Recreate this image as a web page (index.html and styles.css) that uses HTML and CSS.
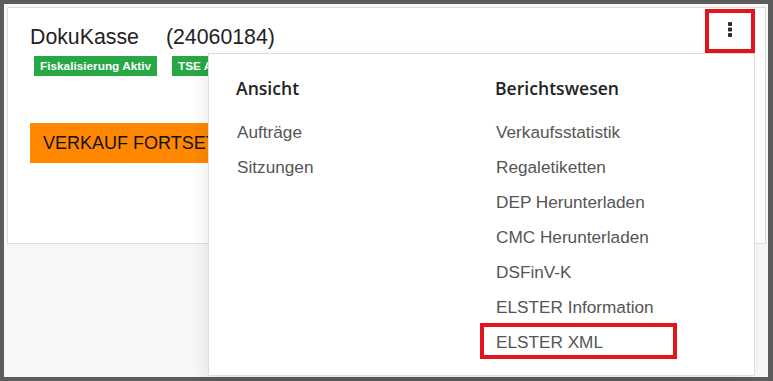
FILE: index.html
```html
<!DOCTYPE html>
<html lang="de">
<head>
<meta charset="utf-8">
<title>DokuKasse</title>
<link rel="stylesheet" href="styles.css">
</head>
<body>
<div class="frame">
  <div class="page">
    <div class="card">
      <div class="card-head">
        <h1 class="title"><span>DokuKasse</span><span class="num">(24060184)</span></h1>
        <button class="kebab" aria-label="Menü">
          <svg width="6" height="16" viewBox="0 0 6 16"><rect x="1" y="0" width="4" height="4" rx="0.8" fill="#2b2f36"/><rect x="1" y="5.5" width="4" height="4" rx="0.8" fill="#2b2f36"/><rect x="1" y="11" width="4" height="4" rx="0.8" fill="#2b2f36"/></svg>
        </button>
      </div>
      <div class="badges">
        <span class="badge">Fiskalisierung Aktiv</span>
        <span class="badge">TSE Aktiv</span>
      </div>
      <button class="btn-orange">VERKAUF FORTSETZEN</button>
    </div>
    <div class="menu">
      <div class="col">
        <div class="head">Ansicht</div>
        <div class="item">Aufträge</div>
        <div class="item">Sitzungen</div>
      </div>
      <div class="col">
        <div class="head">Berichtswesen</div>
        <div class="item">Verkaufsstatistik</div>
        <div class="item">Regaletiketten</div>
        <div class="item">DEP Herunterladen</div>
        <div class="item">CMC Herunterladen</div>
        <div class="item">DSFinV-K</div>
        <div class="item">ELSTER Information</div>
        <div class="item highlight">ELSTER XML</div>
      </div>
    </div>
  </div>
</div>
</body>
</html>
```

FILE: styles.css
```css
*, *::before, *::after { box-sizing: border-box; }
html, body { margin: 0; padding: 0; }
body {
  width: 773px;
  height: 381px;
  background: #5c5c5c;
  overflow: hidden;
  font-family: "Liberation Sans", Arial, sans-serif;
}
.frame {
  padding: 4px 5px 4px 4px;
  height: 381px;
}
.page {
  position: relative;
  background: #f7f7f7;
  height: 373px;
  padding: 3px 2px 0 3px;
}
.card {
  background: #fff;
  border: 1px solid #dcdcdc;
  height: 237px;
  padding: 0 10px 0 22px;
}
.card-head {
  display: flex;
  justify-content: space-between;
  align-items: flex-start;
  padding-top: 1px;
}
.title {
  margin: 0;
  padding-top: 16px;
  font-weight: 400;
  font-size: 21.3px;
  line-height: 24px;
  color: #222;
}
.title .num { margin-left: 27px; }
.kebab {
  width: 50px;
  height: 44px;
  border: 4px solid #e3141b;
  background: #fff;
  display: flex;
  align-items: center;
  justify-content: center;
  padding: 0 0 2px 0;
  margin: 0;
}
.kebab svg { display: block; }
.badges {
  display: flex;
  gap: 15px;
  margin-top: 3px;
  margin-left: 4px;
}
.badge {
  background: #28a745;
  color: #fff;
  font-weight: 700;
  font-size: 11.8px;
  line-height: 20px;
  height: 20px;
  padding: 0 6px 0 6px;
}
.btn-orange {
  display: block;
  margin-top: 47px;
  height: 40px;
  border: 0;
  background: #ff8800;
  color: #111;
  font-family: "Liberation Sans", Arial, sans-serif;
  font-size: 18px;
  padding: 0 13px;
  white-space: nowrap;
}
.menu {
  position: absolute;
  left: 204px;
  top: 49px;
  width: 547px;
  height: 323px;
  background: #fff;
  border: 1px solid #dedede;
  box-shadow: -4px 4px 14px rgba(0,0,0,0.07);
  display: grid;
  grid-template-columns: 259px 1fr;
  padding: 22px 0 0 27px;
}
.head {
  font-family: "Open Sans", "Noto Sans", sans-serif;
  font-weight: 600;
  font-size: 17.6px;
  line-height: 24px;
  color: #222;
  margin-bottom: 15px;
}
.item {
  font-size: 17.2px;
  line-height: 35px;
  color: #555;
  margin-left: 1px;
}
.highlight { position: relative; }
.highlight::after {
  content: "";
  position: absolute;
  left: -16px;
  top: -2px;
  width: 197px;
  height: 36px;
  border: 4px solid #e3141b;
}
```
